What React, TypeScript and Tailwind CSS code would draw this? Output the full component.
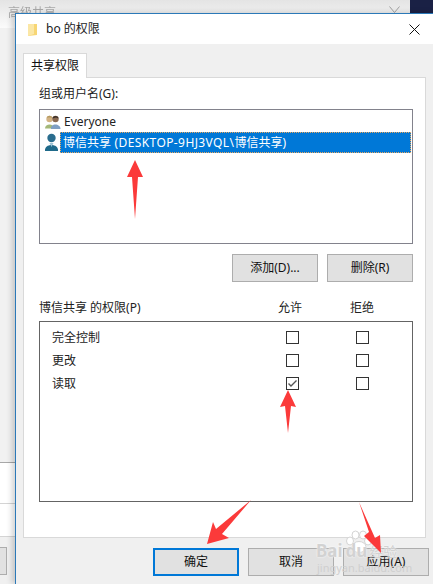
const font = "font-['Noto_Sans','Noto_Sans_CJK_SC',sans-serif]";

function Check({ checked = false }: { checked?: boolean }) {
  return (
    <span className="flex h-[13px] w-[13px] items-center justify-center border border-[#333333] bg-white">
      {checked && (
        <svg width="11" height="11" viewBox="0 0 11 11">
          <path d="M1.5 5.5 L4 8 L9.5 2.5" fill="none" stroke="#555555" strokeWidth="1.4" />
        </svg>
      )}
    </span>
  );
}

function Btn({ label, cls = "border border-[#adadad]" }: { label: string; cls?: string }) {
  return (
    <div className={`flex h-[28px] w-[86px] items-center justify-center bg-[#e1e1e1] text-[12px] text-[#111111] ${cls}`}>
      {label}
    </div>
  );
}

function PermRow({ label, allow = false }: { label: string; allow?: boolean }) {
  return (
    <div className="flex h-[23px] items-center">
      <span className="w-[246px] pl-[12px] text-[12px] text-[#222222]">{label}</span>
      <Check checked={allow} />
      <span className="w-[57px]" />
      <Check />
    </div>
  );
}

function GroupsIcon() {
  return (
    <svg width="17" height="17" viewBox="0 0 17 17">
      <circle cx="5.500" cy="5" r="3.200" fill="#d3b384" />
      <path d="M3 4 C3 1 8 1 8 4 L7 3.500 L4 3.500 Z" fill="#b59a60" />
      <path d="M1 14.500 C1 9 10 9 10 14.500 Z" fill="#a4b878" />
      <circle cx="11.500" cy="5" r="3.200" fill="#8a6a52" />
      <path d="M8.500 4.500 C8.500 1 14.500 1 14.500 4.500 L12 3.500 Z" fill="#3a3028" />
      <path d="M7 15 C6 9 16.500 9 16.500 15 Z" fill="#7f9fc4" />
    </svg>
  );
}

function UserIcon() {
  return (
    <svg width="15" height="19" viewBox="0 0 15 19">
      <circle cx="7.500" cy="5" r="4.200" fill="#2a6d8e" />
      <path d="M1 18 C0 10 15 10 14 18 Z" fill="#1f6a8a" />
      <path d="M5.500 10 L7.500 14 L9.500 10 Z" fill="#9cc4d6" />
    </svg>
  );
}

export default function App() {
  return (
    <div className={`relative h-[584px] w-[433px] overflow-hidden bg-[#f0f0f0] ${font}`}>
      {/* Window behind the dialog */}
      <div className="absolute left-0 top-0 h-[28px] w-[433px] bg-gradient-to-b from-[#e4e4e4] to-[#fbfbfb] blur-[0.5px]">
        <span className="absolute left-[8px] top-[4px] text-[12px] text-[#a8a8a8]">高级共享</span>
        <svg className="absolute left-[389px] top-[6px]" width="11" height="8" viewBox="0 0 11 8">
          <path d="M0.500 0.500 L5.500 6.500 L10.500 0.500" fill="none" stroke="#a0a0a0" strokeWidth="1" />
        </svg>
        <div className="absolute left-[410px] top-0 h-[14px] w-[23px] bg-[#1a2145]" />
      </div>
      <div className="absolute left-0 top-[28px] h-[434px] w-[15px] bg-[#f1f1f1]" />
      <div className="absolute left-0 top-[462px] h-[122px] w-[15px] bg-[#f0f0f0]">
        <div className="h-[74px] border-t border-[#a8a8a8] bg-white">
          <div className="mt-[40px] h-px w-full bg-[#d4d4d4]" />
          <div className="mt-[32px] h-px w-full bg-[#d4d4d4]" />
        </div>
        <div className="mt-[11px] h-[28px] w-[7px] border border-l-0 border-[#adadad] bg-[#e1e1e1]" />
      </div>

      {/* Dialog */}
      <div className="absolute left-[15px] top-[13px] flex h-[571px] w-[418px] flex-col border-l border-t border-[#2b79b8] bg-[#f0f0f0] shadow-[-3px_0_6px_rgba(0,0,0,0.18)]">
        <div className="flex h-[30px] shrink-0 items-center bg-white pl-[12px] pr-[13px]">
          <svg width="10" height="13" viewBox="0 0 10 13">
            <path d="M0 1 H9 V12 L0 13 Z" fill="#f7d675" />
            <path d="M0 1 H6 V11 L0 13 Z" fill="#fbe7a6" />
          </svg>
          <span className="ml-[8px] flex-1 text-[12px] text-[#222222]">bo 的权限</span>
          <svg width="11" height="11" viewBox="0 0 11 11">
            <path d="M0.500 0.500 L10.500 10.500 M10.500 0.500 L0.500 10.500" stroke="#111111" strokeWidth="1" />
          </svg>
        </div>

        <div className="relative flex-1 px-[7px] pt-[9px]">
          <div className="relative z-10 flex h-[25px] w-[64px] items-center justify-center border border-b-0 border-[#d9d9d9] bg-white text-[12px] text-[#111111]">
            共享权限
          </div>
          <div className="-mt-px flex h-[461px] w-[403px] flex-col border border-[#d9d9d9] bg-white pl-[15px] pr-[12px]">
            <div className="mt-[7px] h-[18px] text-[12px] leading-[18px] text-[#222222]">组或用户名(G):</div>
            <div className="mt-[6px] flex h-[135px] w-[374px] flex-col border border-[#82828c] bg-white pl-[4px] pr-[1px] pt-[2px]">
              <div className="flex h-[20px] items-center gap-[3px] text-[12px] text-[#222222]">
                <GroupsIcon />
                <span>Everyone</span>
              </div>
              <div className="flex h-[21px] items-center gap-[1px]">
                <UserIcon />
                <div className="flex h-[21px] flex-1 items-center whitespace-pre border border-dotted border-[#e8a860] bg-[#0078d7] pl-[2px] text-[12px] text-white">
                  <span>博信共享</span>
                  <span className="tracking-[0.4px]"> (DESKTOP-9HJ3VQL\</span>
                  <span>博信共享)</span>
                </div>
              </div>
            </div>
            <div className="mt-[10px] flex w-[374px] justify-end gap-[9px]">
              <Btn label="添加(D)..." />
              <Btn label="删除(R)" />
            </div>
            <div className="mt-[17px] flex h-[18px] items-center text-[12px] text-[#222222]">
              <span className="w-[239px]">博信共享 的权限(P)</span>
              <span className="w-[72px]">允许</span>
              <span>拒绝</span>
            </div>
            <div className="mt-[4px] h-[181px] w-[374px] border border-[#646464] bg-white pt-[4px]">
              <PermRow label="完全控制" />
              <PermRow label="更改" />
              <PermRow label="读取" allow />
            </div>
          </div>
          <div className="mt-[10px] flex w-[412px] gap-[9px] pl-[130px]">
            <Btn label="确定" cls="border-2 border-[#0078d7]" />
            <Btn label="取消" />
            <Btn label="应用(A)" />
          </div>
        </div>
      </div>

      {/* Baidu watermark */}
      <div className="pointer-events-none absolute left-[316px] top-[528px] h-[48px] w-[100px]">
        <svg className="absolute left-[28px] top-[2px]" width="30" height="24" viewBox="0 0 30 24">
          <g fill="#ffffff" stroke="#d4d4d4" strokeWidth="1">
            <ellipse cx="6" cy="11" rx="3.500" ry="4" />
            <ellipse cx="11.500" cy="5" rx="3.500" ry="4" />
            <ellipse cx="19" cy="5" rx="3.500" ry="4" />
            <ellipse cx="24" cy="11" rx="3.500" ry="4" />
            <ellipse cx="15" cy="17" rx="7" ry="5.500" />
          </g>
        </svg>
        <div className="absolute left-0 top-[13px] whitespace-nowrap text-[17px] font-bold leading-[20px] text-[#d2d2d2] [text-shadow:0_0_2px_#ffffff]">
          Bai<span className="ml-[3px]">du</span>
          <span className="ml-[2px] text-[14px] font-normal">经验</span>
        </div>
        <div className="absolute left-[1px] top-[33px] whitespace-nowrap text-[11px] leading-[14px] text-[#cfcfcf]">jingyan.baidu.com</div>
      </div>

      {/* Red annotation arrows */}
      <svg className="pointer-events-none absolute left-0 top-0" width="433" height="584" viewBox="0 0 433 584">
        <g fill="#fb3a3a">
          <path d="M135 160 L143 177 L138 177 L135 219 L132 177 L127 177 Z" />
          <path d="M288 390 L296 407 L291 406 L288 433 L285 406 L280 407 Z" />
          <path d="M207 544 L213 522 L216 529 L251 500 L222 534 L229 538 Z" />
          <path d="M381 553 L380 535 L375 538 L359 502 L369 532 L364 536 Z" />
        </g>
      </svg>
    </div>
  );
}
